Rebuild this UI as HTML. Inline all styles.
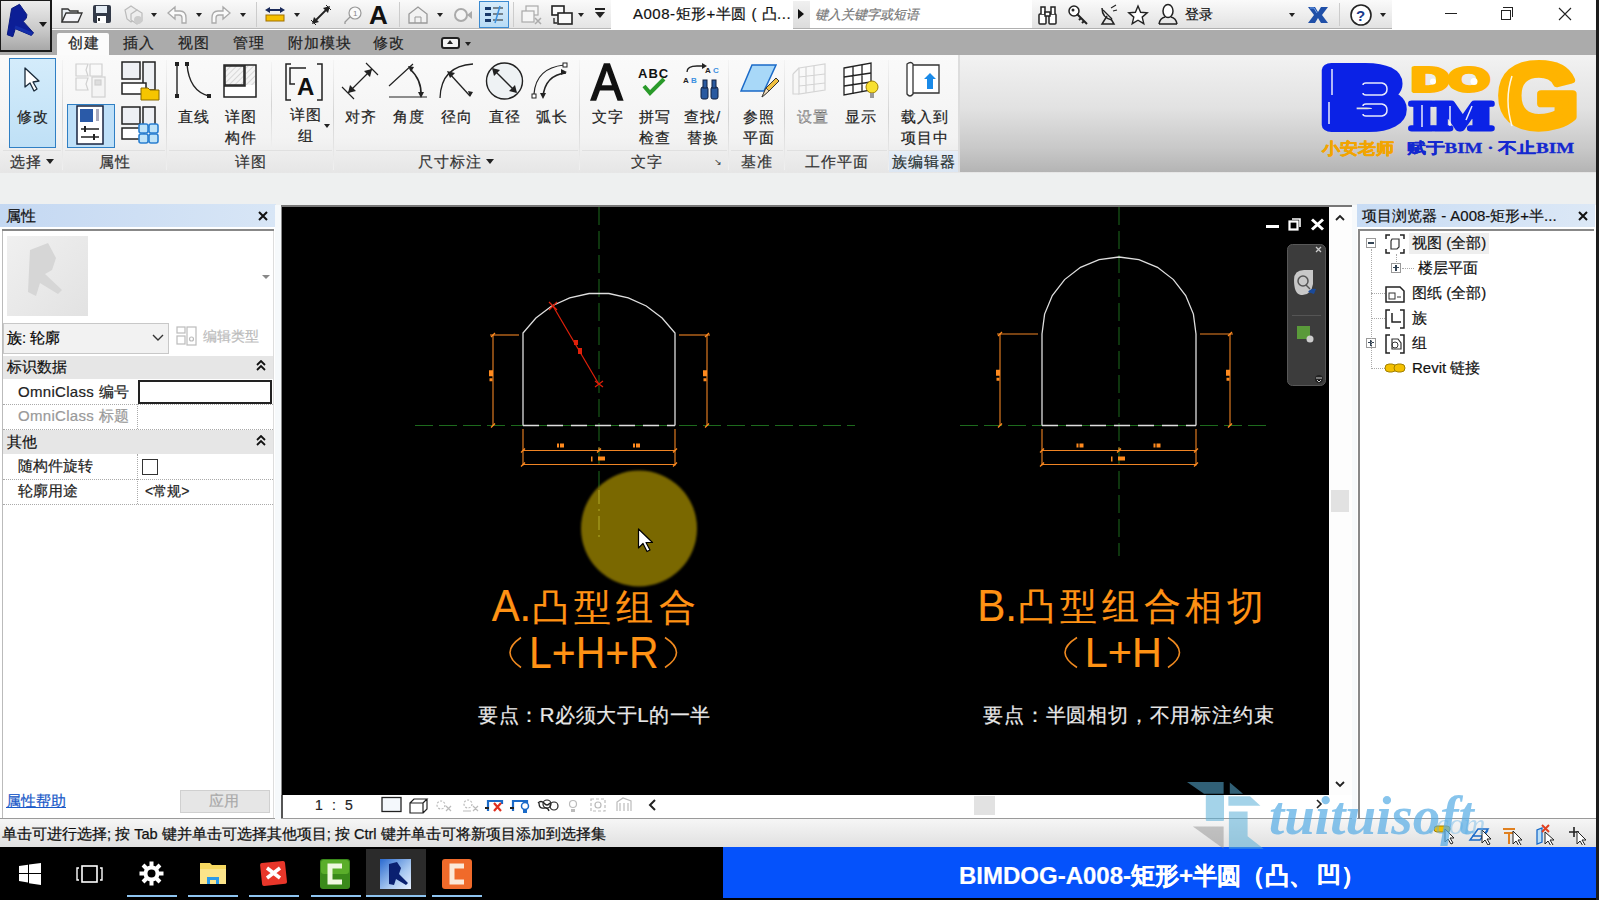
<!DOCTYPE html>
<html><head><meta charset="utf-8">
<style>
*{box-sizing:border-box}
body{margin:0;width:1599px;height:900px;overflow:hidden;position:relative;background:#000;font-family:"Liberation Sans",sans-serif;font-size:14px;color:#000}
.a{position:absolute}
.t{position:absolute;white-space:nowrap;line-height:16px;-webkit-text-stroke-width:0.2px}
#title{left:0;top:0;width:1596px;height:30px;background:#fff}
#qat{left:50px;top:0;width:561px;height:29px;background:linear-gradient(#fafafa,#e4e4e4);border-bottom:1px solid #b8b8b8}
#appbtn{left:0;top:0;width:52px;height:52px;background:linear-gradient(#ececec,#c8c8c8 60%,#a8a8a8);border:1.5px solid #1a1a1a;border-width:1px 2px 2px 1px}
#tabs{left:0;top:30px;width:1596px;height:25px;background:#ababab}
#ribbon{left:0;top:55px;width:1596px;height:118px;background:linear-gradient(#fafafa 0%,#f3f3f3 70%,#e6e6e6 100%)}
#ribr{left:960px;top:55px;width:636px;height:117px;background:linear-gradient(#f2f2f2 0%,#e2e2e2 45%,#c8c8c8 80%,#b4b4b4 100%)}
#gap{left:0;top:173px;width:1596px;height:32px;background:#eef0f0}
#props{left:0;top:205px;width:277px;height:614px;background:#fff}
#draw{left:281px;top:205px;width:1049px;height:590px;background:#000;border-top:2px solid #777;border-left:1px solid #888}
#vscroll{left:1329px;top:205px;width:23px;height:590px;background:#fdfdfd;border-top:2px solid #777}
#vcb{left:281px;top:795px;width:1071px;height:24px;background:#fff;border-left:2px solid #555}
#pb{left:1357px;top:205px;width:239px;height:614px;background:#fff}
#status{left:0;top:818px;width:1596px;height:29px;background:linear-gradient(#f6f6f6,#e0e0e0);border-top:1px solid #9a9a9a}
#task{left:0;top:847px;width:1599px;height:53px;background:#000}
#banner{left:723px;top:847px;width:873px;height:51px;background:#0552fb}
#rborder{left:1596px;top:0;width:3px;height:900px;background:#1c1c1c}
.tab{position:absolute;top:35px;line-height:16px;color:#222;font-size:15px;letter-spacing:1px;-webkit-text-stroke:0.2px #222}
.dd{position:absolute;width:0;height:0;border-left:3px solid transparent;border-right:3px solid transparent;border-top:4px solid #222}
.sep{position:absolute;top:60px;width:1px;height:110px;background:linear-gradient(#f4f4f4,#d4d4d4 50%,#f0f0f0)}
.plab{position:absolute;top:150px;height:22px;background:linear-gradient(#eeeeee,#e6e6e6);line-height:22px;text-align:center;color:#333;border-top:1px solid #e0e0e0;font-size:15px;letter-spacing:1px;-webkit-text-stroke:0.2px #333}
.rl{position:absolute;text-align:center;line-height:21px;color:#222;white-space:nowrap;font-size:15px;letter-spacing:1px;text-indent:1px;-webkit-text-stroke:0.2px #222}
</style></head><body>
<div id="title" class="a"></div>
<div id="qat" class="a"></div>
<div id="tabs" class="a"></div>
<div id="appbtn" class="a"></div>
<div id="ribbon" class="a"></div>
<div id="ribr" class="a"></div>
<div id="gap" class="a"></div>
<div id="props" class="a"></div>
<div id="draw" class="a"></div>
<div id="vscroll" class="a"></div>
<div id="vcb" class="a"></div>
<div id="pb" class="a"></div>
<div id="status" class="a"></div>
<div id="task" class="a"></div>
<div id="banner" class="a"></div>
<div id="rborder" class="a"></div>

<!-- tabs -->
<div class="a" style="left:57px;top:33px;width:52px;height:22px;background:#fbfbfb;border-radius:2px 2px 0 0"></div>
<div class="tab" style="left:68px">创建</div>
<div class="tab" style="left:123px">插入</div>
<div class="tab" style="left:178px">视图</div>
<div class="tab" style="left:233px">管理</div>
<div class="tab" style="left:288px">附加模块</div>
<div class="tab" style="left:373px">修改</div>
<div class="a" style="left:441px;top:37px;width:19px;height:12px;border:2px solid #222;border-radius:3px;background:#f4f4f4"></div><div class="a" style="left:447px;top:40px;width:0;height:0;border-left:3.5px solid transparent;border-right:3.5px solid transparent;border-bottom:4px solid #222"></div>
<div class="dd" style="left:465px;top:42px"></div>

<!-- title -->
<div class="t" style="left:633px;top:6px;color:#111;font-size:15px;letter-spacing:0.5px;-webkit-text-stroke:0.2px #111">A008-矩形+半圆 ( 凸...</div>
<div class="a" style="left:793px;top:1px;width:240px;height:28px;background:#fff;border-bottom:1px solid #b0b0b0"></div>
<div class="a" style="left:793px;top:1px;width:17px;height:27px;background:linear-gradient(#f0f0f0,#dcdcdc)"></div>
<div class="a" style="left:798px;top:9px;width:0;height:0;border-top:5px solid transparent;border-bottom:5px solid transparent;border-left:6px solid #111"></div>
<div class="t" style="left:815px;top:7px;color:#777;font-style:italic;font-size:13px">键入关键字或短语</div>
<div class="a" style="left:1032px;top:0px;width:360px;height:29px;background:linear-gradient(#fafafa,#e2e2e2);border-bottom:1px solid #b0b0b0"></div>
<div class="t" style="left:1185px;top:6px;color:#111">登录</div>

<!-- ribbon panels -->
<div class="a" style="left:9px;top:58px;width:47px;height:90px;background:linear-gradient(#d4ecfb,#bfe0f6);border:1px solid #2f7fc4"></div>
<svg class="a" style="left:22px;top:66px" width="22" height="28" viewBox="0 0 22 28"><path d="M3 2 L3 21 L8 17 L12 25 L15 23 L11 16 L17 15 Z" fill="#fff" stroke="#1a2a3a" stroke-width="1.3" stroke-linejoin="round"/></svg>
<div class="rl" style="left:9px;top:106px;width:47px">修改</div>
<div class="plab" style="left:3px;width:58px;text-align:left;padding-left:7px">选择</div>
<div class="dd" style="left:46px;top:159px;border-left-width:4px;border-right-width:4px;border-top-width:5px"></div>
<div class="sep" style="left:62px"></div>

<svg class="a" style="left:70px;top:60px" width="40" height="40" viewBox="0 0 40 40"><g fill="none" stroke="#d0d0d0" stroke-width="1.2"><path d="M6 4h12l-2 6 2 6H6zM20 4h12v12H20zM6 18h12l-2 6 2 6H6z"/><rect x="22" y="17" width="13" height="20" fill="#f4f4f4"/><rect x="25" y="20" width="6" height="5" fill="#ddd"/></g></svg>
<svg class="a" style="left:119px;top:59px" width="42" height="42" viewBox="0 0 42 42"><g stroke="#222" stroke-width="1.5" fill="#eef0f4"><rect x="3" y="3" width="18" height="17"/><rect x="24" y="3" width="12" height="28"/><rect x="3" y="24" width="24" height="11" fill="#fff"/></g><path d="M22 29h7l2 2h9v10H22z" fill="#f6c500" stroke="#8a6a00" stroke-width="1"/></svg>
<div class="a" style="left:67px;top:104px;width:48px;height:44px;background:#bfe0f8;border:1px solid #2f7fc4"></div>
<svg class="a" style="left:75px;top:105px" width="32" height="42" viewBox="0 0 32 42"><rect x="2" y="1" width="26" height="38" fill="#fff" stroke="#1a2540" stroke-width="1.5"/><rect x="5" y="4" width="13" height="13" fill="#2a5aa8"/><rect x="21" y="4" width="3" height="12" fill="#aab"/><path d="M6 24h18M6 32h18" stroke="#222" stroke-width="1.4"/><path d="M10 21v6M19 29v6" stroke="#222" stroke-width="2"/></svg>
<svg class="a" style="left:119px;top:104px" width="42" height="42" viewBox="0 0 42 42"><g stroke="#222" stroke-width="1.5" fill="#eef0f4"><rect x="3" y="3" width="18" height="17"/><rect x="24" y="3" width="12" height="20"/><rect x="3" y="24" width="22" height="11" fill="#fff"/></g><g fill="#bfe3f8" stroke="#2a7fd0" stroke-width="1.6"><rect x="20" y="20" width="9" height="9" rx="2"/><rect x="30" y="20" width="9" height="9" rx="2"/><rect x="20" y="30" width="9" height="9" rx="2"/><rect x="30" y="30" width="9" height="9" rx="2"/></g></svg>
<div class="plab" style="left:65px;width:100px">属性</div>
<div class="sep" style="left:166px"></div>

<svg class="a" style="left:174px;top:61px" width="38" height="40" viewBox="0 0 38 40"><g stroke="#222" stroke-width="1.4" fill="none"><path d="M3 3v32"/><path d="M13 3 Q15 30 35 35"/></g><g fill="#222"><rect x="1" y="1" width="4" height="4"/><rect x="1" y="33" width="4" height="4"/><rect x="11" y="1" width="4" height="4"/><rect x="33" y="33" width="4" height="4"/></g></svg>
<div class="rl" style="left:170px;top:106px;width:46px">直线</div>
<svg class="a" style="left:222px;top:63px" width="37" height="36" viewBox="0 0 37 36"><defs><pattern id="hat" width="4" height="4" patternUnits="userSpaceOnUse" patternTransform="rotate(45)"><rect width="4" height="4" fill="#f4f4f4"/><path d="M0 0v4" stroke="#bbb" stroke-width="1"/></pattern></defs><g stroke="#222" stroke-width="1.5"><path d="M2 2h32v32H2z" fill="#fff"/><path d="M23 2v21H2" fill="none"/><rect x="3" y="3" width="19" height="19" fill="url(#hat)"/><rect x="24" y="3" width="9" height="19" fill="url(#hat)" stroke="none"/></g></svg>
<div class="rl" style="left:217px;top:106px;width:46px">详图</div>
<div class="rl" style="left:217px;top:127px;width:46px">构件</div>
<div class="sep" style="left:271px;top:62px;height:86px"></div>
<svg class="a" style="left:284px;top:62px" width="40" height="40" viewBox="0 0 40 40"><g stroke="#222" stroke-width="1.5" fill="none"><path d="M7 2H2v36h5M33 2h5v36h-5"/><path d="M22 6H6v16h5"/></g><text x="13" y="33" font-family="Liberation Sans" font-weight="bold" font-size="24" fill="#111">A</text></svg>
<div class="rl" style="left:282px;top:104px;width:46px">详图</div>
<div class="rl" style="left:282px;top:125px;width:46px">组</div>
<div class="dd" style="left:324px;top:124px"></div>
<div class="plab" style="left:169px;width:163px">详图</div>
<div class="sep" style="left:333px"></div>

<svg class="a" style="left:340px;top:61px" width="40" height="40" viewBox="0 0 40 40"><g stroke="#222" stroke-width="1.2" fill="none"><path d="M2 26l12 12M26 2l12 12M8 32L32 8"/></g><path d="M8 32l2-8 6 6zM32 8l-8 2 6 6z" fill="#222"/></svg>
<div class="rl" style="left:337px;top:106px;width:46px">对齐</div>
<svg class="a" style="left:388px;top:62px" width="40" height="38" viewBox="0 0 40 38"><g stroke="#222" stroke-width="1.2" fill="none"><path d="M1 35h38M1 24L25 2"/><path d="M22 7 Q34 18 33 34" stroke-width="1.6"/></g><path d="M20 4l6 1-3 5zM33 36l-3-6h6z" fill="#222"/></svg>
<div class="rl" style="left:385px;top:106px;width:46px">角度</div>
<svg class="a" style="left:438px;top:62px" width="40" height="38" viewBox="0 0 40 38"><g stroke="#222" stroke-width="1.3" fill="none"><path d="M2 36 Q3 4 35 2"/><path d="M11 11L32 34" /></g><path d="M9 9l8 2-5 5zM32 35l-2-6 5 1z" fill="#222"/></svg>
<div class="rl" style="left:433px;top:106px;width:46px">径向</div>
<svg class="a" style="left:485px;top:61px" width="40" height="40" viewBox="0 0 40 40"><circle cx="19.5" cy="20" r="18" fill="#eef2f4" stroke="#222" stroke-width="1.4"/><path d="M8 8L31 31" stroke="#222" stroke-width="1.3"/><path d="M7 7l8 2-6 6zM32 32l-8-2 6-6z" fill="#222"/></svg>
<div class="rl" style="left:481px;top:106px;width:46px">直径</div>
<svg class="a" style="left:531px;top:61px" width="40" height="40" viewBox="0 0 40 40"><g stroke="#222" stroke-width="1.2" fill="none"><path d="M3 33 Q5 7 33 4"/><path d="M12 36 Q14 14 35 12" stroke-width="1.6"/></g><rect x="1" y="33" width="4" height="4" fill="#fff" stroke="#222"/><rect x="32" y="2" width="4" height="4" fill="#fff" stroke="#222"/><path d="M36 11l-6-3v6zM12 38l-3-6h6z" fill="#222"/></svg>
<div class="rl" style="left:528px;top:106px;width:46px">弧长</div>
<div class="plab" style="left:336px;width:242px;text-align:left;padding-left:82px">尺寸标注</div>
<div class="dd" style="left:486px;top:159px;border-left-width:4px;border-right-width:4px;border-top-width:5px"></div>
<div class="sep" style="left:579px"></div>

<div class="a" style="left:591px;top:58px;font-family:'Liberation Sans';font-size:51px;line-height:50px;color:#111;-webkit-text-stroke:1.6px #111;transform:scaleX(0.93);transform-origin:0 0">A</div>
<div class="rl" style="left:584px;top:106px;width:46px">文字</div>
<svg class="a" style="left:636px;top:64px" width="38" height="36" viewBox="0 0 38 36"><text x="2" y="14" font-family="Liberation Sans" font-weight="bold" font-size="13" fill="#111" letter-spacing="1">ABC</text><path d="M8 22l6 7 14-14" stroke="#2a9a2a" stroke-width="4" fill="none"/></svg>
<div class="rl" style="left:631px;top:106px;width:46px">拼写</div>
<div class="rl" style="left:631px;top:127px;width:46px">检查</div>
<svg class="a" style="left:682px;top:62px" width="40" height="40" viewBox="0 0 40 40"><path d="M5 10 Q5 4 15 4h7" stroke="#222" stroke-width="1.3" fill="none"/><path d="M25 4l-5-3v6z" fill="#222"/><text x="23" y="11" font-family="Liberation Sans" font-weight="bold" font-size="8" fill="#222">A</text><text x="31" y="11" font-family="Liberation Sans" font-weight="bold" font-size="8" fill="#3a8fe0">C</text><text x="1" y="21" font-family="Liberation Sans" font-weight="bold" font-size="8" fill="#222">A</text><text x="9" y="21" font-family="Liberation Sans" font-weight="bold" font-size="8" fill="#3a8fe0">B</text><g fill="#2a5aa0" stroke="#102040" stroke-width="1"><rect x="19" y="25" width="7" height="12" rx="2"/><rect x="29" y="25" width="7" height="12" rx="2"/><rect x="21" y="18" width="4" height="8"/><rect x="30" y="18" width="4" height="8"/></g></svg>
<div class="rl" style="left:679px;top:106px;width:46px">查找/</div>
<div class="rl" style="left:679px;top:127px;width:46px">替换</div>
<div class="plab" style="left:582px;width:145px;text-align:left;padding-left:49px">文字</div>
<div class="a" style="left:714px;top:157px;font-size:9px;color:#333">&#8600;</div>
<div class="sep" style="left:728px"></div>

<svg class="a" style="left:740px;top:63px" width="40" height="38" viewBox="0 0 40 38"><path d="M12 2h24L24 28H1z" fill="#a8d8f8" stroke="#1a6ac8" stroke-width="1.5"/><path d="M22 34l4-9 10-10 3 3-10 10z" fill="#f0c040" stroke="#333" stroke-width="1"/><path d="M22 34l4-9 3 3z" fill="#f5e0c0" stroke="#333" stroke-width="0.8"/></svg>
<div class="rl" style="left:735px;top:106px;width:46px">参照</div>
<div class="rl" style="left:735px;top:127px;width:46px">平面</div>
<div class="plab" style="left:731px;width:52px">基准</div>
<div class="sep" style="left:784px"></div>

<svg class="a" style="left:791px;top:62px" width="38" height="36" viewBox="0 0 38 36"><g fill="none" stroke="#d4d4d4" stroke-width="1.2"><path d="M8 6l26-4v26L8 32z"/><path d="M15 5v26M23 4v26M8 15l26-3M8 24l26-3"/><path d="M2 12l6-6M2 12v20l6 0"/></g></svg>
<div class="rl" style="left:789px;top:106px;width:46px;color:#bbb">设置</div>
<svg class="a" style="left:841px;top:62px" width="40" height="40" viewBox="0 0 40 40"><g fill="#fff" stroke="#222" stroke-width="1.3"><path d="M3 6l27-5v27L3 33z"/><path d="M12 5v27M21 3v27M3 15l27-4M3 24l27-4" fill="none"/></g><circle cx="31" cy="25" r="6" fill="#f8e030" stroke="#a08000" stroke-width="1"/><rect x="29" y="31" width="4" height="5" fill="#999"/></svg>
<div class="rl" style="left:837px;top:106px;width:46px">显示</div>
<div class="plab" style="left:787px;width:100px">工作平面</div>
<div class="sep" style="left:888px"></div>

<svg class="a" style="left:904px;top:61px" width="40" height="38" viewBox="0 0 40 38"><path d="M6 4h29v28H6z" fill="#fff" stroke="#333" stroke-width="1.3"/><path d="M3 3q4-3 6 0v30q-3 4-6 0z" fill="#fff" stroke="#333" stroke-width="1.3"/><path d="M20 18l6-6 6 6h-3v10h-6V18z" fill="#1a8ae8"/></svg>
<div class="rl" style="left:900px;top:106px;width:46px">载入到</div>
<div class="rl" style="left:900px;top:127px;width:46px">项目中</div>
<div class="plab" style="left:889px;width:69px;background:linear-gradient(#e6eef8,#dce6f2);color:#233">族编辑器</div>
<div class="a" style="left:958px;top:55px;width:2px;height:117px;background:#ddd"></div>


<!-- app button -->
<svg class="a" style="left:0;top:0" width="52" height="52" viewBox="0 0 52 52"><path d="M11.6 8.6L19.5 4.3L26.9 14.7L26.3 18.3L23.2 21.4L33.6 33L31.2 35.4L15.3 28.7L12.8 36.7L7.3 34.8Z" fill="#0c1e96" stroke="#0a1a80" stroke-width="1" stroke-linejoin="round"/><path d="M15 27l17 7" stroke="#1a3ab8" stroke-width="3" opacity="0.6"/><path d="M39 22h8l-4 5z" fill="#1a1a1a"/></svg>
<!-- QAT icons -->
<svg class="a" style="left:60px;top:5px" width="24" height="20" viewBox="0 0 24 20"><path d="M2 4h6l2 2h8v3H6L2 17z" fill="#e8eef4" stroke="#333" stroke-width="1.3"/><path d="M2 17l4-9h16l-4 9z" fill="#f4f4f8" stroke="#333" stroke-width="1.3"/></svg>
<svg class="a" style="left:92px;top:4px" width="20" height="20" viewBox="0 0 20 20"><rect x="1" y="1" width="18" height="18" rx="2" fill="#333a48"/><rect x="4" y="2" width="11" height="7" fill="#e4ecf4"/><rect x="5" y="12" width="9" height="7" fill="#fff"/><rect x="6" y="14" width="2" height="3" fill="#333"/></svg>
<svg class="a" style="left:121px;top:4px" width="24" height="22" viewBox="0 0 24 22"><g fill="#eee" stroke="#bbb" stroke-width="1.2"><path d="M4 6l6-4 6 4v8l-6 4-4-3z"/><path d="M10 10l6-4 5 3v8l-5 3-6-4z"/></g><circle cx="17" cy="16" r="4" fill="#ccc"/></svg>
<div class="dd" style="left:151px;top:13px"></div>
<svg class="a" style="left:166px;top:5px" width="22" height="20" viewBox="0 0 22 20"><path d="M2 8l7-6v4h5q6 0 6 7v5h-4v-5q0-3-3-3H9v4z" fill="#fafafa" stroke="#aaa" stroke-width="1.3"/></svg>
<div class="dd" style="left:196px;top:13px"></div>
<svg class="a" style="left:210px;top:5px" width="22" height="20" viewBox="0 0 22 20"><path d="M20 8l-7-6v4H8q-6 0-6 7v5h4v-5q0-3 3-3h4v4z" fill="#fafafa" stroke="#aaa" stroke-width="1.3"/></svg>
<div class="dd" style="left:240px;top:13px"></div>
<div class="a" style="left:256px;top:2px;width:1px;height:25px;background:#ccc"></div>
<svg class="a" style="left:264px;top:6px" width="22" height="18" viewBox="0 0 22 18"><path d="M3 4h16" stroke="#1a2a5a" stroke-width="2"/><path d="M1 4l5-3v6zM21 4l-5-3v6z" fill="#1a2a5a"/><rect x="2" y="9" width="18" height="6" fill="#f6c000" stroke="#a07000" stroke-width="1"/></svg>
<div class="dd" style="left:294px;top:13px"></div>
<svg class="a" style="left:310px;top:4px" width="22" height="22" viewBox="0 0 22 22"><path d="M4 18L18 4" stroke="#222" stroke-width="1.8"/><path d="M2 20l2-7 5 5zM20 2l-7 2 5 5z" fill="#222"/><path d="M1 16l5 5M16 1l5 5" stroke="#222" stroke-width="1"/></svg>
<svg class="a" style="left:341px;top:5px" width="22" height="20" viewBox="0 0 22 20"><circle cx="14" cy="8" r="6" fill="#fafafa" stroke="#999" stroke-width="1.2"/><text x="12" y="11" font-size="8" fill="#888" font-family="Liberation Sans">1</text><path d="M9 12l-5 5v2" stroke="#999" stroke-width="1.3" fill="none"/></svg>
<div class="a" style="left:369px;top:0px;font-size:26px;line-height:30px;font-weight:bold;color:#111">A</div>
<div class="a" style="left:399px;top:2px;width:1px;height:25px;background:#ccc"></div>
<svg class="a" style="left:407px;top:5px" width="22" height="20" viewBox="0 0 22 20"><path d="M2 9l9-7 9 7v9H2z" fill="#f2f2f2" stroke="#999" stroke-width="1.3"/><path d="M8 18v-6h6v6" fill="none" stroke="#999"/></svg>
<div class="dd" style="left:437px;top:13px"></div>
<svg class="a" style="left:451px;top:5px" width="22" height="20" viewBox="0 0 22 20"><circle cx="10" cy="10" r="6" fill="#f4f4f4" stroke="#aaa" stroke-width="2"/><path d="M16 10l5-4v8z" fill="#aaa"/></svg>
<div class="a" style="left:479px;top:1px;width:30px;height:27px;background:linear-gradient(#d8ecfa,#b8dcf6);border:1px solid #3b8ad0"></div>
<svg class="a" style="left:483px;top:5px" width="22" height="20" viewBox="0 0 22 20"><g fill="#1a3a6a"><rect x="2" y="2" width="6" height="3"/><rect x="2" y="8" width="6" height="3"/><rect x="2" y="14" width="6" height="3"/></g><path d="M10 3h10M10 9h10M10 15h10" stroke="#222" stroke-width="1.2"/><path d="M12 18L17 1" stroke="#3a90e0" stroke-width="1.5"/></svg>
<div class="a" style="left:513px;top:2px;width:1px;height:25px;background:#ccc"></div>
<svg class="a" style="left:520px;top:4px" width="24" height="22" viewBox="0 0 24 22"><g fill="#f6f6f6" stroke="#aaa" stroke-width="1.2"><rect x="6" y="2" width="12" height="9"/><rect x="2" y="7" width="12" height="11"/></g><path d="M15 14l6 6M21 14l-6 6" stroke="#aaa" stroke-width="1.5"/></svg>
<svg class="a" style="left:550px;top:4px" width="24" height="22" viewBox="0 0 24 22"><g fill="#fafafa" stroke="#222" stroke-width="1.6"><rect x="2" y="2" width="12" height="9"/><rect x="8" y="9" width="14" height="11"/></g><path d="M4 14v5h3" stroke="#222" stroke-width="1.3" fill="none"/></svg>
<div class="dd" style="left:578px;top:13px"></div>
<div class="a" style="left:595px;top:8px;width:10px;height:2px;background:#222"></div>
<div class="dd" style="left:595px;top:12px;border-left-width:5px;border-right-width:5px;border-top-width:6px"></div>
<!-- infocenter icons -->
<svg class="a" style="left:1037px;top:4px" width="22" height="22" viewBox="0 0 22 22"><g fill="#fff" stroke="#222" stroke-width="1.5"><rect x="2" y="10" width="7" height="10" rx="1"/><rect x="12" y="10" width="7" height="10" rx="1"/><path d="M4 10V3h4v7M14 10V3h4v7"/><rect x="8" y="8" width="5" height="4"/></g></svg>
<svg class="a" style="left:1067px;top:4px" width="22" height="22" viewBox="0 0 22 22"><circle cx="7" cy="7" r="5" fill="#fff" stroke="#222" stroke-width="1.5"/><circle cx="6" cy="6" r="1.5" fill="#222"/><path d="M10 10l10 10M17 17l-2 2M14 14l-2 2" stroke="#222" stroke-width="2" fill="none"/></svg>
<svg class="a" style="left:1098px;top:4px" width="22" height="22" viewBox="0 0 22 22"><path d="M4 4q0 10 10 12" stroke="#222" stroke-width="1.5" fill="none"/><path d="M5 6l9 9" stroke="#222" stroke-width="1.3"/><path d="M9 12l-5 8h12l-3-5" stroke="#222" stroke-width="1.5" fill="none"/><path d="M13 4l5-3M15 7l4-1" stroke="#222" stroke-width="1.2"/></svg>
<svg class="a" style="left:1127px;top:4px" width="22" height="22" viewBox="0 0 22 22"><path d="M11 2l2.6 6.3 6.6.5-5 4.3 1.6 6.6L11 16.2l-5.8 3.5 1.6-6.6-5-4.3 6.6-.5z" fill="#fff" stroke="#222" stroke-width="1.4"/></svg>
<svg class="a" style="left:1157px;top:3px" width="22" height="23" viewBox="0 0 22 23"><ellipse cx="11" cy="8" rx="5" ry="6.5" fill="#fff" stroke="#222" stroke-width="1.5"/><path d="M2 21q1-6 6-7M20 21q-1-6-6-7M2 21h18" stroke="#222" stroke-width="1.5" fill="none"/></svg>
<div class="dd" style="left:1289px;top:13px"></div>
<svg class="a" style="left:1307px;top:5px" width="22" height="20" viewBox="0 0 22 20"><path d="M1 2h7l3 5 3-5h7l-6 8 6 8h-7l-3-5-3 5H1l6-8z" fill="#1f4fa8"/><path d="M3 3h4l3 5" stroke="#6fa0e8" stroke-width="1" fill="none"/></svg>
<div class="a" style="left:1339px;top:3px;width:1px;height:23px;background:#ccc"></div>
<svg class="a" style="left:1349px;top:3px" width="24" height="24" viewBox="0 0 24 24"><circle cx="12" cy="12" r="10" fill="#fff" stroke="#222" stroke-width="1.6"/><text x="7" y="18" font-family="Liberation Sans" font-weight="bold" font-size="15" fill="#1a3a8a">?</text></svg>
<div class="dd" style="left:1380px;top:13px"></div>
<!-- window controls -->
<div class="a" style="left:1445px;top:13px;width:12px;height:1px;background:#222"></div>
<div class="a" style="left:1501px;top:10px;width:10px;height:10px;border:1px solid #222;background:#fff"></div>
<div class="a" style="left:1503px;top:7px;width:10px;height:10px;border-top:1px solid #222;border-right:1px solid #222"></div>
<svg class="a" style="left:1558px;top:7px" width="14" height="14" viewBox="0 0 14 14"><path d="M1 1l12 12M13 1L1 13" stroke="#222" stroke-width="1.1"/></svg>
<!-- logo -->
<svg class="a" style="left:0;top:0" width="1599" height="180" viewBox="0 0 1599 180"><text transform="translate(1324.15,124.67) scale(1.0769,0.7907)" font-family="Liberation Sans" font-weight="bold" font-size="100" fill="#0b22e6" stroke="#0b22e6" stroke-width="18" stroke-linejoin="round">B</text><text transform="translate(1411.48,91.02) scale(0.5200,0.3293)" font-family="Liberation Sans" font-weight="bold" font-size="100" fill="#ffb400" stroke="#ffb400" stroke-width="12" stroke-linejoin="round">DO</text><text transform="translate(1409.87,128.96) scale(0.6232,0.4079)" font-family="Liberation Serif" font-weight="bold" font-size="100" fill="#0b22e6" stroke="#0b22e6" stroke-width="12" stroke-linejoin="round">IM</text><text transform="translate(1498.00,127.36) scale(1.0400,0.9103)" font-family="Liberation Sans" font-weight="bold" font-size="100" fill="#ffb400" stroke="#ffb400" stroke-width="8" stroke-linejoin="round">G</text><text transform="translate(1322.37,154.38) scale(0.1850,0.1635)" font-family="Liberation Sans" font-weight="bold" font-size="100" fill="#f2a400" stroke="#f2a400" stroke-width="3" stroke-linejoin="round">小安老师</text><text transform="translate(1406.81,152.75) scale(0.1900,0.1500)" font-family="Liberation Serif" font-weight="bold" font-size="100" fill="#1428d0" stroke="#1428d0" stroke-width="2" stroke-linejoin="round">赋于BIM · 不止BIM</text><g stroke="#fff" stroke-width="1.5" fill="none" opacity="0.9">
<path d="M1332 69v26M1329 102v22"/>
<path d="M1363 85q0-2 3-2h16q5 1 5 6t-5 6h-16q-3 0-3-2"/>
<path d="M1363 106q0-2 3-2h16q5 1 5 6t-5 6h-16q-3 0-3-2"/>
<path d="M1422 105v22M1450 106v20M1472 106l-6 14"/>
<path d="M1512 76q-8 24 0 50"/>

</g>
<circle cx="1433" cy="81.5" r="3" fill="#fff"/><circle cx="1474" cy="81.5" r="3.5" fill="#fff"/></svg>


<!-- properties -->
<div class="a" style="left:0;top:204px;width:276px;height:23px;background:linear-gradient(90deg,#c4d8f2,#d8e6f6)"></div>
<div class="t" style="left:6px;top:208px;font-size:15px;color:#111">属性</div>
<svg class="a" style="left:257px;top:210px" width="12" height="12" viewBox="0 0 12 12"><path d="M2 2l8 8M10 2l-8 8" stroke="#111" stroke-width="2"/></svg>
<div class="a" style="left:2px;top:229px;width:272px;height:2px;background:#888"></div>
<div class="a" style="left:2px;top:231px;width:1px;height:587px;background:#bbb"></div>
<div class="a" style="left:273px;top:231px;width:1px;height:587px;background:#ddd"></div>
<div class="a" style="left:7px;top:236px;width:81px;height:80px;background:linear-gradient(135deg,#f0f0f0,#e2e2e2)"></div>
<svg class="a" style="left:20px;top:240px" width="60" height="65" viewBox="0 0 60 65"><path d="M10 10 L28 3 L36 18 L32 30 L25 34 L42 50 L38 54 L20 43 L16 56 L8 52 Z" fill="#d6d6d6"/></svg>
<div class="dd" style="left:262px;top:275px;border-top-color:#888;border-left-width:4px;border-right-width:4px"></div>
<div class="a" style="left:3px;top:323px;width:166px;height:31px;background:#f2f2f2;border:1px solid #c8c8c8"></div>
<div class="t" style="left:7px;top:330px;font-size:15px">族: 轮廓</div>
<svg class="a" style="left:152px;top:334px" width="12" height="8" viewBox="0 0 12 8"><path d="M1 1l5 5 5-5" stroke="#333" stroke-width="1.4" fill="none"/></svg>
<svg class="a" style="left:176px;top:326px" width="22" height="20" viewBox="0 0 22 20"><g fill="none" stroke="#bbb" stroke-width="1.2"><rect x="1" y="1" width="8" height="6"/><rect x="1" y="10" width="8" height="8"/><rect x="11" y="1" width="9" height="18"/><circle cx="15.5" cy="13" r="2"/></g></svg>
<div class="t" style="left:203px;top:328px;font-size:14px;color:#bbb">编辑类型</div>
<div class="a" style="left:3px;top:356px;width:270px;height:23px;background:#e6e6e6"></div>
<div class="t" style="left:7px;top:359px;font-size:15px;color:#111">标识数据</div>
<svg class="a" style="left:256px;top:360px" width="10" height="12" viewBox="0 0 10 12"><path d="M1 5l4-4 4 4M1 10l4-4 4 4" stroke="#111" stroke-width="1.8" fill="none"/></svg>
<div class="t" style="left:18px;top:384px;font-size:15px;color:#222;letter-spacing:0.3px">OmniClass 编号</div>
<div class="a" style="left:138px;top:380px;width:134px;height:24px;border:2px solid #222;background:#fff"></div>
<div class="t" style="left:18px;top:408px;font-size:15px;color:#999;letter-spacing:0.3px">OmniClass 标题</div>
<div class="a" style="left:3px;top:404px;width:270px;height:0;border-top:1px dotted #aaa"></div>
<div class="a" style="left:3px;top:429px;width:270px;height:0;border-top:1px dotted #aaa"></div>
<div class="a" style="left:137px;top:404px;width:0;height:25px;border-left:1px dotted #aaa"></div>
<div class="a" style="left:3px;top:430px;width:270px;height:24px;background:#e6e6e6"></div>
<div class="t" style="left:7px;top:434px;font-size:15px;color:#111">其他</div>
<svg class="a" style="left:256px;top:435px" width="10" height="12" viewBox="0 0 10 12"><path d="M1 5l4-4 4 4M1 10l4-4 4 4" stroke="#111" stroke-width="1.8" fill="none"/></svg>
<div class="t" style="left:18px;top:458px;font-size:15px;color:#222">随构件旋转</div>
<div class="a" style="left:142px;top:459px;width:16px;height:16px;border:1px solid #333;background:#fff"></div>
<div class="t" style="left:18px;top:483px;font-size:15px;color:#222">轮廓用途</div>
<div class="t" style="left:145px;top:483px;font-size:14px;color:#222">&lt;常规&gt;</div>
<div class="a" style="left:3px;top:479px;width:270px;height:0;border-top:1px dotted #aaa"></div>
<div class="a" style="left:3px;top:504px;width:270px;height:0;border-top:1px dotted #aaa"></div>
<div class="a" style="left:137px;top:454px;width:0;height:50px;border-left:1px dotted #aaa"></div>
<div class="t" style="left:6px;top:793px;font-size:15px;color:#1a5ac8;text-decoration:underline">属性帮助</div>
<div class="a" style="left:180px;top:790px;width:90px;height:23px;background:#e6e6e6;border:1px solid #d0d0d0"></div>
<div class="t" style="left:209px;top:793px;font-size:15px;color:#aaa">应用</div>
<div class="a" style="left:275px;top:205px;width:6px;height:614px;background:#f6f9fb"></div>

<!-- project browser -->
<div class="a" style="left:1357px;top:204px;width:238px;height:23px;background:linear-gradient(90deg,#c8dcf4,#dce8f6)"></div>
<div class="t" style="left:1362px;top:208px;font-size:15px;color:#111">项目浏览器 - A008-矩形+半...</div>
<svg class="a" style="left:1577px;top:210px" width="12" height="12" viewBox="0 0 12 12"><path d="M2 2l8 8M10 2l-8 8" stroke="#111" stroke-width="2"/></svg>
<div class="a" style="left:1358px;top:229px;width:236px;height:2px;background:#888"></div>
<div class="a" style="left:1358px;top:229px;width:2px;height:590px;background:#888"></div>
<div class="a" style="left:1352px;top:205px;width:5px;height:614px;background:#f6f9fb"></div>
<div class="a" style="left:1409px;top:233px;width:80px;height:21px;background:#eeeeee"></div>
<div class="a" style="left:1366px;top:238px;width:10px;height:10px;border:1px solid #999;background:#fff"></div>
<div class="a" style="left:1368px;top:242px;width:6px;height:2px;background:#345"></div>
<div class="a" style="left:1391px;top:263px;width:10px;height:10px;border:1px solid #999;background:#fff"></div>
<div class="a" style="left:1393px;top:267px;width:6px;height:1px;background:#345"></div>
<div class="a" style="left:1395px;top:265px;width:2px;height:6px;background:#345"></div>
<div class="a" style="left:1366px;top:338px;width:10px;height:10px;border:1px solid #999;background:#fff"></div>
<div class="a" style="left:1368px;top:342px;width:6px;height:1px;background:#345"></div>
<div class="a" style="left:1370px;top:340px;width:2px;height:6px;background:#345"></div>
<div class="a" style="left:1371px;top:249px;width:0;height:120px;border-left:1px dotted #aaa"></div>
<div class="a" style="left:1371px;top:368px;width:14px;height:0;border-top:1px dotted #aaa"></div>
<div class="a" style="left:1371px;top:293px;width:14px;height:0;border-top:1px dotted #aaa"></div>
<div class="a" style="left:1371px;top:318px;width:14px;height:0;border-top:1px dotted #aaa"></div>
<div class="a" style="left:1396px;top:254px;width:0;height:10px;border-left:1px dotted #aaa"></div>
<div class="a" style="left:1402px;top:268px;width:12px;height:0;border-top:1px dotted #aaa"></div>
<svg class="a" style="left:1385px;top:234px" width="20" height="20" viewBox="0 0 20 20"><path d="M1 5V1h4M15 1h4v4M19 15v4h-4M5 19H1v-4" stroke="#222" stroke-width="1.5" fill="none"/><path d="M7 5h7v8l-2 2H6V7z" fill="none" stroke="#333" stroke-width="1.2"/></svg>
<div class="t" style="left:1412px;top:235px;font-size:15px;color:#111">视图 (全部)</div>
<div class="t" style="left:1418px;top:260px;font-size:15px;color:#111">楼层平面</div>
<svg class="a" style="left:1385px;top:284px" width="20" height="20" viewBox="0 0 20 20"><path d="M1 3h14l4 4v11H1z" fill="#fff" stroke="#222" stroke-width="1.5"/><rect x="4" y="9" width="6" height="6" fill="none" stroke="#333"/><path d="M12 13h4" stroke="#333"/></svg>
<div class="t" style="left:1412px;top:285px;font-size:15px;color:#111">图纸 (全部)</div>
<svg class="a" style="left:1385px;top:309px" width="20" height="20" viewBox="0 0 20 20"><path d="M5 1H1v18h4M15 1h4v18h-4" stroke="#222" stroke-width="1.5" fill="none"/><path d="M7 4v9h9" stroke="#222" stroke-width="1.5" fill="none"/></svg>
<div class="t" style="left:1412px;top:310px;font-size:15px;color:#111">族</div>
<svg class="a" style="left:1385px;top:334px" width="20" height="20" viewBox="0 0 20 20"><path d="M5 1H1v18h4M15 1h4v18h-4" stroke="#222" stroke-width="1.5" fill="none"/><path d="M7 5h6l3 4v6H7z" fill="none" stroke="#333" stroke-width="1.2"/><circle cx="10" cy="11" r="3" fill="none" stroke="#333"/></svg>
<div class="t" style="left:1412px;top:335px;font-size:15px;color:#111">组</div>
<svg class="a" style="left:1384px;top:362px" width="22" height="12" viewBox="0 0 22 12"><rect x="1" y="2" width="11" height="8" rx="4" fill="#f4c000" stroke="#a08000"/><rect x="10" y="2" width="11" height="8" rx="4" fill="#f4c000" stroke="#a08000"/></svg>
<div class="t" style="left:1412px;top:360px;font-size:15px;color:#111">Revit 链接</div>

<!-- status bar -->
<div class="t" style="left:2px;top:826px;font-size:14.6px;color:#111;-webkit-text-stroke:0.25px #111">单击可进行选择; 按 Tab 键并单击可选择其他项目; 按 Ctrl 键并单击可将新项目添加到选择集</div>

<!-- taskbar -->
<svg class="a" style="left:19px;top:863px" width="22" height="22" viewBox="0 0 22 22"><path d="M0 3l9-1.3V10H0zM10 1.5L22 0v10H10zM0 11h9v8.5L0 18zM10 11h12v11l-12-1.7z" fill="#fff"/></svg>
<svg class="a" style="left:76px;top:865px" width="27" height="18" viewBox="0 0 27 18"><rect x="6" y="1" width="15" height="16" fill="none" stroke="#fff" stroke-width="1.6"/><path d="M3 3H1v12h2M24 3h2v12h-2" stroke="#fff" stroke-width="1.4" fill="none"/></svg>
<svg class="a" style="left:139px;top:861px" width="25" height="25" viewBox="0 0 25 25"><g fill="#fff"><circle cx="12.5" cy="12.5" r="8"/><g id="tooth"><rect x="10.5" y="0.5" width="4" height="6"/></g><use href="#tooth" transform="rotate(45 12.5 12.5)"/><use href="#tooth" transform="rotate(90 12.5 12.5)"/><use href="#tooth" transform="rotate(135 12.5 12.5)"/><use href="#tooth" transform="rotate(180 12.5 12.5)"/><use href="#tooth" transform="rotate(225 12.5 12.5)"/><use href="#tooth" transform="rotate(270 12.5 12.5)"/><use href="#tooth" transform="rotate(315 12.5 12.5)"/></g><circle cx="12.5" cy="12.5" r="4" fill="#000"/></svg>
<svg class="a" style="left:199px;top:861px" width="28" height="25" viewBox="0 0 28 25"><path d="M1 2h10l2 2h14v19H1z" fill="#f6d860"/><path d="M1 8h26v15H1z" fill="#fbe48a"/><path d="M8 23v-7h12v7h-3v-4h-6v4z" fill="#2a9ae8"/></svg>
<svg class="a" style="left:260px;top:860px" width="27" height="27" viewBox="0 0 27 27"><rect x="1" y="2" width="25" height="23" rx="2" fill="#e8362a" transform="rotate(-6 13 13)"/><path d="M7 8l13 10M20 8L7 18" stroke="#fff" stroke-width="3.5"/></svg>
<svg class="a" style="left:320px;top:859px" width="30" height="30" viewBox="0 0 30 30"><rect x="0" y="0" width="30" height="30" rx="3" fill="#3a8a1a"/><rect x="1" y="1" width="28" height="14" rx="3" fill="#5aae2a"/><path d="M22 7H10v16h12" stroke="#f0f8e0" stroke-width="5" fill="none"/></svg>
<div class="a" style="left:366px;top:849px;width:60px;height:48px;background:#2b2b2b"></div>
<svg class="a" style="left:380px;top:859px" width="31" height="30" viewBox="0 0 31 30"><rect width="31" height="30" fill="url(#rvg)"/><defs><linearGradient id="rvg" x1="0" y1="0" x2="1" y2="1"><stop offset="0" stop-color="#2a6ad0"/><stop offset="0.6" stop-color="#a8c8f0"/><stop offset="1" stop-color="#e8f0ff"/></linearGradient></defs><path d="M9 5l8-2 4 6-2 6 9 9-2 2-10-6-2 6-5-1z" fill="#0a2070"/></svg>
<svg class="a" style="left:442px;top:859px" width="30" height="30" viewBox="0 0 30 30"><rect width="30" height="30" rx="3" fill="#f06a2a"/><path d="M22 7H10v16h12" stroke="#fbe8d8" stroke-width="5" fill="none"/></svg>
<div class="a" style="left:127px;top:895px;width:50px;height:2px;background:#8ec4f0"></div>
<div class="a" style="left:188px;top:895px;width:50px;height:2px;background:#8ec4f0"></div>
<div class="a" style="left:249px;top:895px;width:50px;height:2px;background:#8ec4f0"></div>
<div class="a" style="left:311px;top:895px;width:50px;height:2px;background:#8ec4f0"></div>
<div class="a" style="left:366px;top:895px;width:60px;height:2px;background:#8ec4f0"></div>
<div class="a" style="left:432px;top:895px;width:50px;height:2px;background:#8ec4f0"></div>
<div class="t" style="left:959px;top:862px;font-size:24px;line-height:28px;font-weight:bold;color:#fff">BIMDOG-A008-矩形+半圆<span style="letter-spacing:0">（</span>凸、<span style="margin-left:4px">凹</span>）</div>


<!-- drawing -->
<svg class="a" style="left:282px;top:207px" width="1047" height="588" viewBox="282 207 1047 588">
<g fill="none">
<path d="M599 207V556" stroke="#1d6a1d" stroke-width="1" stroke-dasharray="18 6"/>
<path d="M415 425.5H855" stroke="#1d6a1d" stroke-width="1" stroke-dasharray="18 6"/>
<path d="M1119 207V556" stroke="#1d6a1d" stroke-width="1" stroke-dasharray="18 6"/>
<path d="M960 425.5H1272" stroke="#1d6a1d" stroke-width="1" stroke-dasharray="18 6"/>
<polyline points="523.0,425.5 523.0,333.0 535.9,318.0 551.7,306.0 569.7,297.8 589.1,293.5 608.9,293.5 628.3,297.8 646.3,306.0 662.1,318.0 675.0,333.0 675.0,425.5" stroke="#dedede" stroke-width="1.3"/>
<path d="M523 425.5H675" stroke="#dedede" stroke-width="1.3" stroke-dasharray="16 8"/>
<polyline points="1042.0,425.5 1042.0,334.0 1044.6,314.1 1052.3,295.5 1064.6,279.6 1080.5,267.3 1099.1,259.6 1119.0,257.0 1138.9,259.6 1157.5,267.3 1173.4,279.6 1185.7,295.5 1193.4,314.1 1196.0,334.0 1196.0,425.5" stroke="#dedede" stroke-width="1.3"/>
<path d="M1042 425.5H1196" stroke="#dedede" stroke-width="1.3" stroke-dasharray="16 8"/>
<path d="M490 335H519" stroke="#f08424" stroke-width="1.1"/>
<path d="M493 335V425.5" stroke="#f08424" stroke-width="1.1"/>
<path d="M491 337l4-4M491 427.5l4-4" stroke="#ff8a1e" stroke-width="1.3"/>
<rect x="489" y="370.25" width="4" height="6" fill="#ff8a1e"/><rect x="489.5" y="378.25" width="3" height="3" fill="#ff8a1e"/>
<path d="M679 335H710" stroke="#f08424" stroke-width="1.1"/>
<path d="M707 335V425.5" stroke="#f08424" stroke-width="1.1"/>
<path d="M705 337l4-4M705 427.5l4-4" stroke="#ff8a1e" stroke-width="1.3"/>
<rect x="703" y="370.25" width="4" height="6" fill="#ff8a1e"/><rect x="703.5" y="378.25" width="3" height="3" fill="#ff8a1e"/>
<path d="M523 429V465.5M675 429V465.5M523 450.5H675M523 464.5H675" stroke="#f08424" stroke-width="1.1"/>
<path d="M599 447.5v4" stroke="#f08424" stroke-width="1.1"/>
<path d="M521 452.5l4-4" stroke="#ff8a1e" stroke-width="1.3"/>
<path d="M673 452.5l4-4" stroke="#ff8a1e" stroke-width="1.3"/>
<path d="M597 452.5l4-4" stroke="#ff8a1e" stroke-width="1.3"/>
<path d="M521 466.5l4-4" stroke="#ff8a1e" stroke-width="1.3"/>
<path d="M673 466.5l4-4" stroke="#ff8a1e" stroke-width="1.3"/>
<rect x="557.0" y="443.5" width="2" height="4" fill="#ff8a1e"/><rect x="560.0" y="443.5" width="4" height="4" fill="#ff8a1e"/>
<rect x="633.0" y="443.5" width="2" height="4" fill="#ff8a1e"/><rect x="636.0" y="443.5" width="4" height="4" fill="#ff8a1e"/>
<rect x="591" y="456.5" width="1.5" height="5" fill="#ff8a1e"/><rect x="598" y="456.5" width="7" height="4" fill="#ff8a1e"/>
<path d="M997 334H1038" stroke="#f08424" stroke-width="1.1"/>
<path d="M1000 334V425.5" stroke="#f08424" stroke-width="1.1"/>
<path d="M998 336l4-4M998 427.5l4-4" stroke="#ff8a1e" stroke-width="1.3"/>
<rect x="996" y="369.75" width="4" height="6" fill="#ff8a1e"/><rect x="996.5" y="377.75" width="3" height="3" fill="#ff8a1e"/>
<path d="M1200 334H1233" stroke="#f08424" stroke-width="1.1"/>
<path d="M1230 334V425.5" stroke="#f08424" stroke-width="1.1"/>
<path d="M1228 336l4-4M1228 427.5l4-4" stroke="#ff8a1e" stroke-width="1.3"/>
<rect x="1226" y="369.75" width="4" height="6" fill="#ff8a1e"/><rect x="1226.5" y="377.75" width="3" height="3" fill="#ff8a1e"/>
<path d="M1042 429V465.5M1196 429V465.5M1042 450.5H1196M1042 464.5H1196" stroke="#f08424" stroke-width="1.1"/>
<path d="M1119 447.5v4" stroke="#f08424" stroke-width="1.1"/>
<path d="M1040 452.5l4-4" stroke="#ff8a1e" stroke-width="1.3"/>
<path d="M1194 452.5l4-4" stroke="#ff8a1e" stroke-width="1.3"/>
<path d="M1117 452.5l4-4" stroke="#ff8a1e" stroke-width="1.3"/>
<path d="M1040 466.5l4-4" stroke="#ff8a1e" stroke-width="1.3"/>
<path d="M1194 466.5l4-4" stroke="#ff8a1e" stroke-width="1.3"/>
<rect x="1076.5" y="443.5" width="2" height="4" fill="#ff8a1e"/><rect x="1079.5" y="443.5" width="4" height="4" fill="#ff8a1e"/>
<rect x="1153.5" y="443.5" width="2" height="4" fill="#ff8a1e"/><rect x="1156.5" y="443.5" width="4" height="4" fill="#ff8a1e"/>
<rect x="1111" y="456.5" width="1.5" height="5" fill="#ff8a1e"/><rect x="1118" y="456.5" width="7" height="4" fill="#ff8a1e"/>
<path d="M553 306L599 384.5" stroke="#e0200a" stroke-width="1.2"/>
<path d="M549 302l8 8M557 302l-8 8" stroke="#e0200a" stroke-width="1.2"/>
<path d="M595 381l8 6M595 387l8-6" stroke="#e0200a" stroke-width="1.2"/>
<rect x="574" y="340" width="4" height="5" fill="#e0200a"/><rect x="578" y="348" width="4" height="6" fill="#e0200a"/>
</g>
<circle cx="639" cy="528.5" r="58" fill="#7a6800" filter="url(#blr)"/>
<defs><filter id="blr"><feGaussianBlur stdDeviation="0.9"/></filter></defs>
<path d="M599 490V540" stroke="#a8a020" stroke-width="1.2" stroke-dasharray="14 5 2 5"/>
<path d="M638.5 529v19l4.5-4.5 4 8 3-1.5-4-7.5h6.5z" fill="#fff" stroke="#000" stroke-width="1.2" stroke-linejoin="round"/>
<g font-family="Liberation Sans" fill="#ff9214" stroke="#ff9214" stroke-width="0.15">
<text transform="translate(491.7,621.4) scale(0.94,1)" font-size="44.4">A.</text>
<text x="531.7" y="619.7" font-size="37.4" letter-spacing="5.3">凸型组合</text>
<text transform="translate(529.1,667.8) scale(0.933,1)" font-size="43.8">L+H+R</text>
<text transform="translate(977.2,621) scale(0.966,1)" font-size="43.6">B.</text>
<text x="1018.3" y="619.4" font-size="37.4" letter-spacing="4.76">凸型组合相切</text>
<text transform="translate(1084.7,667.4) scale(0.972,1)" font-size="42.6">L+H</text>
</g>
<g fill="none" stroke="#f08a20" stroke-width="1.6">
<path d="M521 637.5Q499 652.5 521 667.5"/><path d="M665 637.5Q688 652.5 665 667.5"/>
<path d="M1077 637.5Q1053 652.5 1077 667.5"/><path d="M1168 637.5Q1191 652.5 1168 667.5"/>
</g>
<g font-family="Liberation Sans" fill="#e8e8e8" stroke="#e8e8e8" stroke-width="0.2">
<text x="478.1" y="721.9" font-size="20.4" letter-spacing="0.55">要点：R必须大于L的一半</text>
<text x="983.3" y="721.9" font-size="20.4" letter-spacing="0.8">要点：半圆相切，不用标注约束</text>
</g>
<!-- view window ctrls -->
<path d="M1266 226.5h13" stroke="#fff" stroke-width="3"/>
<rect x="1289.5" y="221.5" width="8" height="8" fill="none" stroke="#fff" stroke-width="2.2"/>
<path d="M1292 219h8v8" fill="none" stroke="#fff" stroke-width="1.6"/>
<path d="M1312 219.5l11 10M1323 219.5l-11 10" stroke="#fff" stroke-width="3"/>
<!-- nav bar -->
<rect x="1287.5" y="244.5" width="38" height="141" rx="5" fill="#3c3c3c" stroke="#585858"/>
<path d="M1316 247l5 5M1321 247l-5 5" stroke="#ccc" stroke-width="1.3"/>
<path d="M1294 280q0-10 10-10h9v14q-2 12-12 11-7-1-7-15z" fill="#c8c8c8"/>
<circle cx="1303" cy="281" r="5" fill="#c8c8c8" stroke="#555" stroke-width="1.5"/>
<path d="M1306 285l4 4" stroke="#555" stroke-width="1.5"/>
<path d="M1308 292q3-4 8-3l-2 5z" fill="#1a4a9a"/>
<path d="M1292 315.5h29" stroke="#555"/>
<rect x="1297" y="326" width="13" height="13" fill="#5a9a3a"/>
<circle cx="1310" cy="339" r="3.5" fill="#ccc"/>
<circle cx="1319" cy="379" r="4" fill="#222"/><path d="M1316 378h6M1317 380l2 2 2-2" stroke="#ccc" stroke-width="1"/>
</svg>
<!-- scrollbars -->
<svg class="a" style="left:1334px;top:213px" width="12" height="10" viewBox="0 0 12 10"><path d="M2 7l4-4 4 4" stroke="#222" stroke-width="1.8" fill="none"/></svg>
<div class="a" style="left:1331px;top:490px;width:18px;height:22px;background:#e2e2e2"></div>
<svg class="a" style="left:1334px;top:779px" width="12" height="10" viewBox="0 0 12 10"><path d="M2 3l4 4 4-4" stroke="#222" stroke-width="1.8" fill="none"/></svg>
<div class="a" style="left:974px;top:796px;width:21px;height:19px;background:#e2e2e2"></div>
<svg class="a" style="left:1314px;top:798px" width="10" height="12" viewBox="0 0 10 12"><path d="M3 2l4 4-4 4" stroke="#222" stroke-width="1.6" fill="none"/></svg>
<!-- view control bar -->
<div class="t" style="left:315px;top:797px;font-size:14px;color:#222">1</div><div class="t" style="left:332px;top:797px;font-size:14px;color:#222">:</div><div class="t" style="left:345px;top:797px;font-size:14px;color:#222">5</div>
<svg class="a" style="left:380px;top:795px" width="280" height="22" viewBox="380 795 280 22">
<rect x="382" y="797.5" width="19" height="14" fill="#f4f8fc" stroke="#222" stroke-width="1.3"/>
<path d="M410 803h13v10h-13zM410 803l4-4h13l-4 4M427 799v10l-4 4" fill="none" stroke="#222" stroke-width="1.2"/>
<g stroke="#bbb" fill="none" stroke-width="1.2"><circle cx="441" cy="805" r="4" stroke-dasharray="2 1.5"/><path d="M446 806l5 5M451 806l-5 5"/></g>
<g stroke="#bbb" fill="none" stroke-width="1.2"><circle cx="468" cy="804" r="4" stroke-dasharray="2 1.5"/><path d="M463 811h8M473 806l5 5M478 806l-5 5"/></g>
<g><path d="M488 811v-10h14v3" stroke="#1a6ac8" stroke-width="2.2" fill="none"/><path d="M485 808h4" stroke="#222" stroke-width="2"/><path d="M494 803l7 8M501 803l-7 8" stroke="#e03020" stroke-width="2.2"/></g>
<g><path d="M513 811v-10h14v2" stroke="#1a6ac8" stroke-width="2.2" fill="none"/><path d="M510 808h4" stroke="#222" stroke-width="2"/><circle cx="525" cy="806" r="3.5" fill="#fff" stroke="#1a6ac8" stroke-width="1.5"/><rect x="523" y="809" width="4" height="4" fill="#1a6ac8"/></g>
<path d="M538 803q3-3 6 0q3 4 6 0M539 803q0 6 5 5 4-1 5 3" stroke="#222" stroke-width="1.3" fill="none"/><circle cx="547" cy="804" r="4" fill="none" stroke="#222" stroke-width="1.2"/><circle cx="554" cy="806" r="4" fill="none" stroke="#222" stroke-width="1.2"/>
<circle cx="573" cy="804" r="3.5" fill="none" stroke="#bbb" stroke-width="1.2"/><path d="M571 809h4v3h-4z" fill="#bbb"/>
<g stroke="#bbb" fill="none" stroke-width="1.2"><path d="M591 799h14v12h-14z" stroke-dasharray="3 2"/><circle cx="598" cy="805" r="3"/></g>
<g stroke="#bbb" fill="none" stroke-width="1.2"><path d="M617 811v-9l6-4 8 3v10M620 803v8M624 803v8M628 803v8"/></g>
<path d="M655 800l-5 5 5 5" stroke="#222" stroke-width="2" fill="none"/>
</svg>
<!-- status bar right icons -->
<svg class="a" style="left:1434px;top:823px" width="165" height="22" viewBox="1434 823 165 22">
<path d="M1437 826h10q3 0 3 3t-3 3h-10q-3 0-3-3t3-3z" fill="#f4c000" stroke="#a08000"/>
<path d="M1445 829v13l3-3 3 5 2-1-3-5h4z" fill="#fff" stroke="#222" stroke-width="1"/>
<path d="M1470 840h10l8-11h-10zM1472 836h12l4-6" stroke="#1a6ac8" stroke-width="1.5" fill="none"/>
<path d="M1482 830v13l3-3 3 5 2-1-3-5h4z" fill="#fff" stroke="#222" stroke-width="1"/>
<path d="M1503 829h12M1504 833h11M1509 833v11" stroke="#e08020" stroke-width="2"/>
<path d="M1513 831v13l3-3 3 5 2-1-3-5h4z" fill="#fff" stroke="#222" stroke-width="1"/>
<path d="M1537 830v14l5-2v-14z" fill="#bde0f8" stroke="#1a6ac8" stroke-width="1.3"/>
<path d="M1542 825l7 7M1549 825l-7 7" stroke="#e04020" stroke-width="2"/>
<path d="M1545 832v12l3-3 3 5 2-1-3-5h4z" fill="#fff" stroke="#222" stroke-width="1"/>
<path d="M1574 827v10M1569 832h10" stroke="#222" stroke-width="1.6"/>
<path d="M1577 831v13l3-3 3 5 2-1-3-5h4z" fill="#fff" stroke="#222" stroke-width="1"/>
</svg>


<!-- watermark -->
<svg class="a" style="left:1180px;top:770px" width="360" height="85" viewBox="1180 770 360 85">
<g fill="#5ab0d8" opacity="0.55">
<path d="M1187 782H1223.6V793.7H1204Z"/>
<path d="M1229.8 782.6L1243 793.7H1229.8Z"/>
<rect x="1205.8" y="795" width="18.2" height="26" rx="1"/>
<path d="M1228.4 796.3H1250L1260.4 805.7H1228.4Z"/>
<path d="M1228.9 811.4H1247.6V836.3L1263.6 848.8H1228.9Z"/>
</g>
<path d="M1192.9 826.6H1223.6V848.8Z" fill="#888" opacity="0.45"/>
<text x="1269" y="834" font-family="Liberation Serif" font-style="italic" font-weight="bold" font-size="55" fill="#5aaee6" opacity="0.72">tuituisoft</text>
<text x="1428" y="834" font-family="Liberation Serif" font-style="italic" font-size="30" fill="#5aaee6" opacity="0.4">.com</text>
</svg>

</body></html>
